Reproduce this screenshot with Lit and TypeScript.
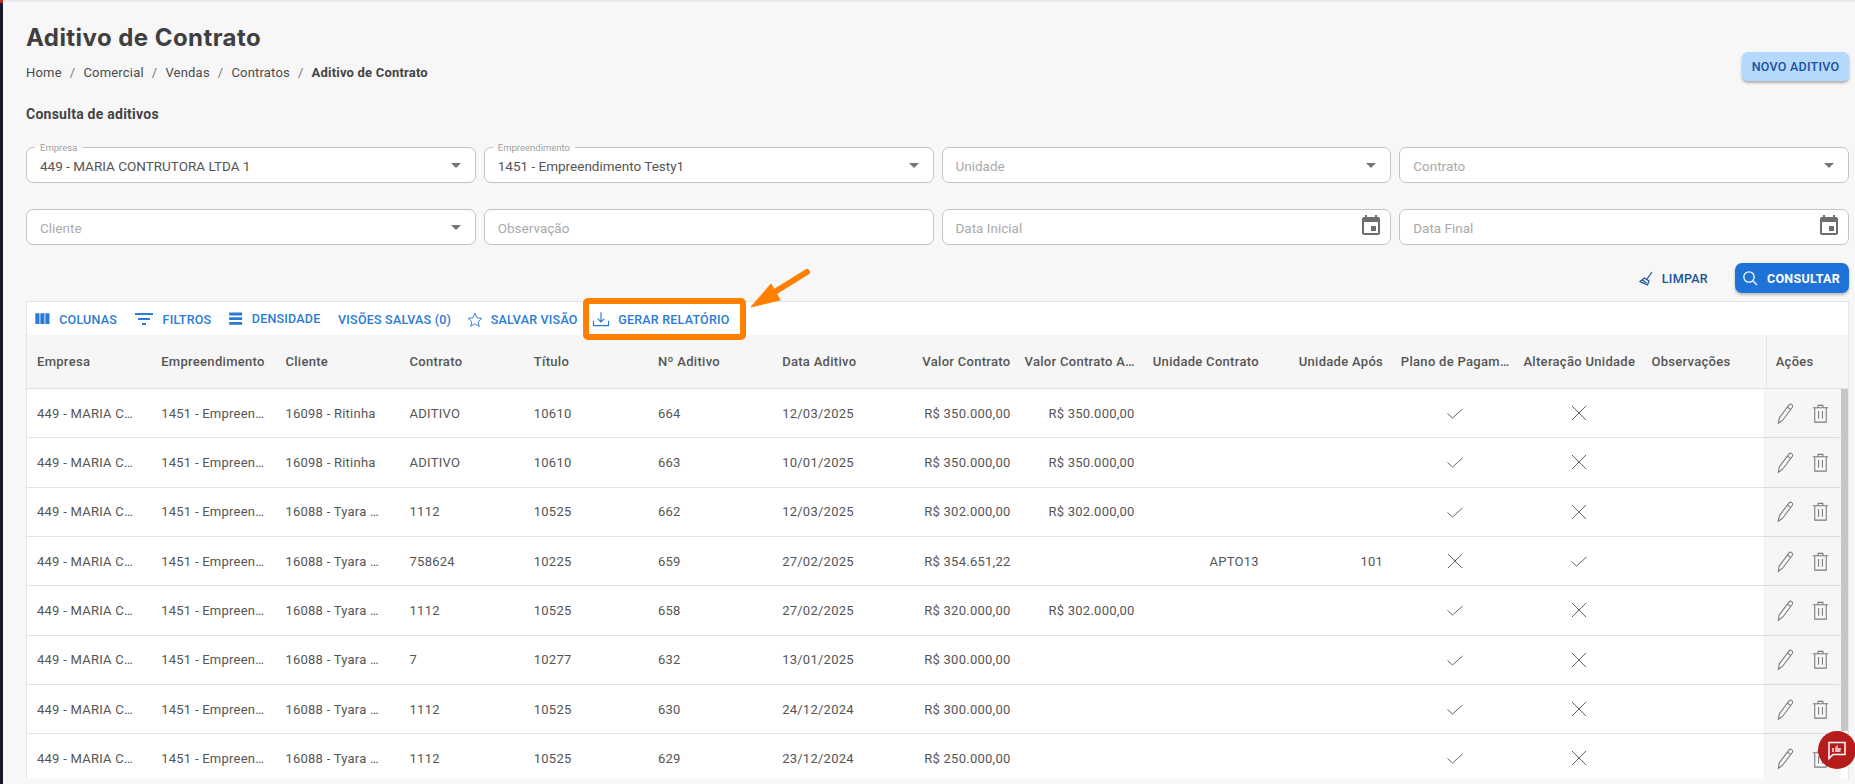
import { LitElement, html, css, svg } from "lit";
import { customElement } from "lit/decorators.js";

const COLS = [
  ["Empresa", "l"], ["Empreendimento", "l"], ["Cliente", "l"], ["Contrato", "l"], ["Título", "l"], ["Nº Aditivo", "l"], ["Data Aditivo", "l"],
  ["Valor Contrato", "r"], ["Valor Contrato A…", "r"], ["Unidade Contrato", "r"], ["Unidade Após", "r"], ["Plano de Pagam…", "c"], ["Alteração Unidade", "c"], ["Observações", "l"],
];

const ROWS: [string, string, string, string, string, string, string, string, string, string, boolean, boolean][] = [
  ["16098 - Ritinha", "ADITIVO", "10610", "664", "12/03/2025", "R$ 350.000,00", "R$ 350.000,00", "", "", "", true, false],
  ["16098 - Ritinha", "ADITIVO", "10610", "663", "10/01/2025", "R$ 350.000,00", "R$ 350.000,00", "", "", "", true, false],
  ["16088 - Tyara …", "1112", "10525", "662", "12/03/2025", "R$ 302.000,00", "R$ 302.000,00", "", "", "", true, false],
  ["16088 - Tyara …", "758624", "10225", "659", "27/02/2025", "R$ 354.651,22", "", "APTO13", "101", "", false, true],
  ["16088 - Tyara …", "1112", "10525", "658", "27/02/2025", "R$ 320.000,00", "R$ 302.000,00", "", "", "", true, false],
  ["16088 - Tyara …", "7", "10277", "632", "13/01/2025", "R$ 300.000,00", "", "", "", "", true, false],
  ["16088 - Tyara …", "1112", "10525", "630", "24/12/2024", "R$ 300.000,00", "", "", "", "", true, false],
  ["16088 - Tyara …", "1112", "10525", "629", "23/12/2024", "R$ 250.000,00", "", "", "", "", true, false],
];

const caret = html`<svg class="caret" viewBox="0 0 10 5"><path d="M0 0h10L5 5z"/></svg>`;
const calendar = html`<svg class="cal" viewBox="0 0 24 24"><path d="M17 12h-5v5h5v-5zM16 1v2H8V1H6v2H5c-1.11 0-1.99.9-1.99 2L3 19c0 1.1.89 2 2 2h14c1.1 0 2-.9 2-2V5c0-1.1-.9-2-2-2h-1V1h-2zm3 18H5V8h14v11z"/></svg>`;
const check = html`<svg class="mark" viewBox="0 0 24 24"><path d="M4.500 12.500 9.500 17 19.500 8" /></svg>`;
const cross = html`<svg class="mark" viewBox="0 0 24 24"><path d="M5 5 19 19M19 5 5 19" /></svg>`;
const pencil = html`<svg class="act" viewBox="0 0 24 24"><path d="M5.500 16.500 15.500 3.200c.8-1 2-1.200 3-.5s1.200 2 .5 3L9 19l-4.500 3.200zM14 5.200l3.600 2.700"/></svg>`;
const trash = html`<svg class="act" viewBox="0 0 24 24"><path d="M4 6h16M6 6v15h12V6M9.500 6V3.500h5V6M10 9.500v8M14 9.500v8"/></svg>`;

@customElement("app-root")
export class AppRoot extends LitElement {
  static styles = css`
    :host { display: block; position: relative; width: 1855px; height: 784px; overflow: hidden; background: #f7f7f7; font-family: Roboto, sans-serif; color: #444; }
    .shell { display: flex; height: 784px; }
    .rail { width: 3px; flex: none; background: linear-gradient(#c62828 0 3px, #1a1a2e 3px); }
    .topshadow { position: absolute; left: 3px; right: 0; top: 0; height: 3px; background: linear-gradient(#e6e6e6, #f7f7f7); }
    .main { flex: 1; min-width: 0; display: flex; flex-direction: column; padding: 0 6px 5px 23px; }
    .head { display: flex; justify-content: space-between; align-items: flex-end; padding-top: 22px; }
    h1 { margin: 0; font: 700 24px/32px Inter, sans-serif; color: #3f3f3f; letter-spacing: 0.45px; }
    .crumbs { display: flex; margin-top: 9px; font-size: 13px; line-height: 20px; color: #4a4a4a; letter-spacing: 0.2px; }
    .crumbs i { font-style: normal; margin: 0 8px; color: #777; }
    .crumbs b { font-weight: 700; color: #444; }
    .new { height: 29px; width: 107px; margin-bottom: 2px; border: 0; border-radius: 6px; background: #b5d8fd; color: #1a5299; font: 500 12.500px Roboto, sans-serif; letter-spacing: 0.25px; box-shadow: 0 2px 3px rgba(0,0,0,.3); padding: 0; }
    h2 { margin: 21px 0 0; font: 700 14px/20px Roboto, sans-serif; letter-spacing: 0.25px; color: #444; }
    .fields { display: grid; grid-template-columns: repeat(4, 1fr); gap: 26px 8px; margin-top: 23px; }
    .field { position: relative; height: 36px; box-sizing: border-box; display: flex; align-items: center; justify-content: space-between; padding: 1px 9px 0 13px; background: #fff; border: 1px solid #c4c4c4; border-radius: 7px; font-size: 13.500px; color: #555; }
    .field.ph { color: #aaa; }
    .float { position: absolute; left: 8px; top: -6px; padding: 0 5px; font-size: 9.500px; line-height: 11px; color: #9e9e9e; background: linear-gradient(#f7f7f7 50%, #fff 50%); }
    .caret { width: 10px; height: 5px; fill: #757575; margin-right: 5px; margin-top: -1px; }
    .cal { width: 24px; height: 24px; fill: #6e6e6e; margin-right: -2px; margin-top: -3px; }
    .actions { display: flex; justify-content: flex-end; align-items: center; gap: 27px; margin-top: 18px; height: 30px; }
    .clear, .search { display: flex; align-items: center; font: 500 12.500px Roboto, sans-serif; letter-spacing: 0.3px; border: 0; background: none; padding: 0; }
    .clear { color: #1a5299; gap: 9px; }
    .clear svg { width: 14px; height: 16px; fill: none; stroke: #1a5299; stroke-width: 1.200; margin-top: 2px; }
    .search { width: 114px; height: 30px; justify-content: center; gap: 9px; padding-right: 2px; box-sizing: border-box; border-radius: 7px; background: #1f72d8; color: #fff; box-shadow: 0 2px 3px rgba(0,0,0,.25); font-weight: 700; }
    .search svg { width: 16px; height: 16px; fill: none; stroke: #fff; stroke-width: 1.300; }
    .card { flex: 1; min-height: 0; margin-top: 8px; background: #fff; border: 1px solid #e4e4e4; border-bottom: 0; overflow: hidden; position: relative; display: flex; flex-direction: column; }
    .tools { display: flex; align-items: center; gap: 17.500px; height: 32px; padding-top: 1px; flex: none; padding-left: 8px; color: #2a7bd6; font-size: 12.500px; font-weight: 500; letter-spacing: 0.22px; }
    .tool { display: flex; align-items: center; gap: 10px; white-space: nowrap; }
    .tool:nth-child(5) { margin-left: -1px; gap: 9px; }
    .tool:nth-child(6) { margin-left: -2px; }
    .tool svg { fill: #2a7bd6; }
    .i-col { width: 20px; height: 20px; margin: 0 -2.500px 0 -3.300px; }
    .i-fil { width: 24px; height: 24px; margin: 0 -3px; }
    .i-den { width: 17.300px; height: 17.300px; margin: 0 -2.200px; }
    .i-star { width: 20px; height: 20px; margin: 2px -3px 0; fill: none !important; stroke: #2a7bd6; stroke-width: 1.100; }
    .i-down { width: 20px; height: 20px; margin: 0 -2.500px; fill: none !important; stroke: #2a7bd6; stroke-width: 1.400; }
    .row { display: grid; grid-template-columns: repeat(14, 124.2px) 75px 1fr; }
    .hdr { height: 54px; box-sizing: border-box; border-bottom: 1px solid #e2e2e2; background: #f6f6f6; flex: none; font-size: 13px; font-weight: 500; color: #555; letter-spacing: 0.3px; }
    .hdr .acoes { grid-column: 15 / 17; border-left: 1px solid #e6e6e6; padding-left: 9px; }
    .cell { display: flex; align-items: center; padding: 0 10px; white-space: nowrap; overflow: hidden; min-width: 0; }
    .cell.r { justify-content: flex-end; }
    .cell.c { justify-content: center; padding: 0; }
    .body { flex: 1; min-height: 0; overflow: hidden; position: relative; }
    .rows .row { height: 49.330px; box-sizing: border-box; border-bottom: 1px solid #e2e2e2; font-size: 13px; color: #555; letter-spacing: 0.25px; }
    .frozen { display: flex; align-items: center; gap: 12px; padding-left: 8px; background: #f6f6f6; margin-bottom: -1px; border-bottom: 1px solid #e2e2e2; box-shadow: -2px 0 3px rgba(0,0,0,.06); }
    .mark { width: 24px; height: 24px; fill: none; stroke: #5c5c5c; stroke-width: 0.950; }
    .act { width: 23px; height: 23px; fill: none; stroke: #7a7a7a; stroke-width: 1.100; }
    .thumb { position: absolute; right: 0; top: 0; width: 7px; height: 342px; background: #c6c6c6; }
    .overlay { position: absolute; left: 0; top: 0; pointer-events: none; }
    .fab { position: absolute; left: 1818px; top: 731px; width: 38px; height: 38px; border-radius: 50%; background: #b71c1c; display: flex; align-items: center; justify-content: center; }
    .fab svg { width: 20px; height: 20px; }
  `;

  private field(text: string, label = "", kind = "caret") {
    return html`<div class="field ${label ? "" : "ph"}">
      ${label ? html`<span class="float">${label}</span>` : ""}
      <span>${text}</span>
      ${kind === "caret" ? caret : kind === "cal" ? calendar : ""}
    </div>`;
  }

  render() {
    return html`
      <div class="shell">
        <div class="rail"></div>
        <div class="main">
          <div class="head">
            <div>
              <h1>Aditivo de Contrato</h1>
              <div class="crumbs"><span>Home</span><i>/</i><span>Comercial</span><i>/</i><span>Vendas</span><i>/</i><span>Contratos</span><i>/</i><b>Aditivo de Contrato</b></div>
            </div>
            <button class="new">NOVO ADITIVO</button>
          </div>
          <h2>Consulta de aditivos</h2>
          <div class="fields">
            ${this.field("449 - MARIA CONTRUTORA LTDA 1", "Empresa")}
            ${this.field("1451 - Empreendimento Testy1", "Empreendimento")}
            ${this.field("Unidade")}
            ${this.field("Contrato")}
            ${this.field("Cliente")}
            ${this.field("Observação", "", "none")}
            ${this.field("Data Inicial", "", "cal")}
            ${this.field("Data Final", "", "cal")}
          </div>
          <div class="actions">
            <button class="clear"><svg viewBox="0 0 14 16"><path d="M13 1 8 8M5.500 7l4.500 3-1.500 4L1 10.500zM3.500 9l4 3M2.500 12l2-.5"/></svg>LIMPAR</button>
            <button class="search"><svg viewBox="0 0 16 16"><circle cx="7" cy="7" r="5.200"/><path d="m11 11 4 4"/></svg>CONSULTAR</button>
          </div>
          <div class="card">
            <div class="tools">
              <span class="tool"><svg class="i-col" viewBox="0 0 24 24"><path d="M10 18h5V5h-5v13zm-6 0h5V5H4v13zM16 5v13h5V5h-5z"/></svg>COLUNAS</span>
              <span class="tool"><svg class="i-fil" viewBox="0 0 24 24"><path d="M10 18h4v-2h-4v2zM3 6v2h18V6H3zm3 7h12v-2H6v2z"/></svg>FILTROS</span>
              <span class="tool"><svg class="i-den" viewBox="0 0 24 24"><path d="M3 20.500h18v-4H3zm0-6.500h18v-4H3zM3 7.500h18v-4H3z"/></svg>DENSIDADE</span>
              <span class="tool">VISÕES SALVAS (0)</span>
              <span class="tool"><svg class="i-star" viewBox="0 0 24 24"><path d="m12 4 2.400 5.400 5.800.6-4.400 3.900 1.300 5.700-5.100-3-5.100 3 1.300-5.700L3.800 10l5.800-.6z"/></svg>SALVAR VISÃO</span>
              <span class="tool"><svg class="i-down" viewBox="0 0 24 24"><path d="M3 14v6h18v-6M12 4v11M8 11.500l4 4 4-4"/></svg>GERAR RELATÓRIO</span>
            </div>
            <div class="row hdr">
              ${COLS.map(([t, a]) => html`<div class="cell ${a}">${t}</div>`)}
              <div class="cell acoes">Ações</div>
            </div>
            <div class="body">
              <div class="rows">
                ${ROWS.map((r) => html`<div class="row">
                  <div class="cell">449 - MARIA C…</div>
                  <div class="cell">1451 - Empreen…</div>
                  <div class="cell">${r[0]}</div>
                  <div class="cell">${r[1]}</div>
                  <div class="cell">${r[2]}</div>
                  <div class="cell">${r[3]}</div>
                  <div class="cell">${r[4]}</div>
                  <div class="cell r">${r[5]}</div>
                  <div class="cell r">${r[6]}</div>
                  <div class="cell r">${r[7]}</div>
                  <div class="cell r">${r[8]}</div>
                  <div class="cell c">${r[10] ? check : cross}</div>
                  <div class="cell c">${r[11] ? check : cross}</div>
                  <div class="cell">${r[9]}</div>
                  <div class="frozen">${pencil}${trash}</div>
                  <div></div>
                </div>`)}
              </div>
              <div class="thumb"></div>
            </div>
          </div>
        </div>
      </div>
      <div class="topshadow"></div>
      <svg class="overlay" width="1855" height="784" viewBox="0 0 1855 784">
        ${svg`<rect x="586" y="301" width="157" height="36" rx="2" fill="none" stroke="#ff8000" stroke-width="6"/>
        <path d="M751 307 771 284 780 300z" fill="#ff8000" stroke="#ff8000" stroke-width="1" stroke-linejoin="round"/>
        <path d="M773 293 807 272" stroke="#ff8000" stroke-width="6" stroke-linecap="round"/>`}
      </svg>
      <div class="fab">
        <svg viewBox="0 0 20 20"><path d="M2 2.500h16v12H6l-4 4z" fill="none" stroke="#fff" stroke-width="1.500"/><path d="M5 8h2v4H5zm3 0 2-3c1 0 1 1 .8 3H14l-.6 4H8z" fill="#f3b6b6"/></svg>
      </div>
    `;
  }
}
